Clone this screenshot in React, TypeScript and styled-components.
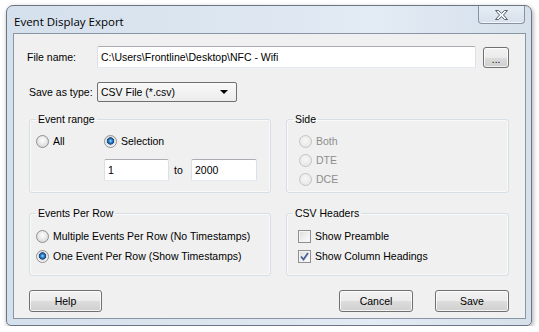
import React from 'react';
import styled, { createGlobalStyle } from 'styled-components';

const GlobalStyle = createGlobalStyle`
  html, body {
    margin: 0;
    padding: 0;
    background: #ffffff;
  }
  body {
    font-family: "Liberation Sans", Arial, sans-serif;
    font-size: 10.5px;
    color: #000;
  }
`;

const Window = styled.div`
  margin: 5px 0 0 6px;
  width: 526px;
  height: 321px;
  box-sizing: border-box;
  border: 1px solid #6a7684;
  border-radius: 7px 7px 5px 5px;
  background: linear-gradient(to right, #d4e0ec 0%, #dfe8f2 55%, #e3ebf4 70%, #d5e0eb 100%);
  box-shadow: 1px 2px 5px rgba(0, 0, 0, 0.35);
  display: flex;
  flex-direction: column;
`;

const TitleBar = styled.div`
  height: 27px;
  display: flex;
  align-items: flex-start;
  justify-content: space-between;
`;

const Title = styled.span`
  font-family: "Open Sans", "Noto Sans", sans-serif;
  font-size: 11.5px;
  line-height: 16px;
  margin: 8px 0 0 7px;
  color: #000;
`;

const CloseButton = styled.div`
  width: 47px;
  height: 18px;
  margin-right: 6px;
  box-sizing: border-box;
  border: 1px solid #8793a2;
  border-top: none;
  border-radius: 0 0 4px 4px;
  background: linear-gradient(#e6edf5, #d7e1ec);
  box-shadow: inset 0 -1px 0 rgba(255, 255, 255, 0.7);
  display: flex;
  align-items: center;
  justify-content: center;
  padding-top: 1px;
`;

const Client = styled.div`
  flex: 1;
  margin: 0 5px 6px 6px;
  border: 1px solid #8996a6;
  background: #f0f0f0;
  padding: 12px 16px 0 15px;
  display: flex;
  flex-direction: column;
`;

const FieldRow = styled.div<{ $top: number }>`
  display: flex;
  align-items: center;
  margin-top: ${p => p.$top}px;
`;

const Label = styled.span<{ $shift?: number }>`
  width: 68px;
  margin-left: ${p => p.$shift || 0}px;
  margin-right: ${p => -(p.$shift || 0)}px;
  flex-shrink: 0;
  white-space: nowrap;
`;

const TextInput = styled.div<{ $width: number }>`
  width: ${p => p.$width}px;
  height: 22px;
  box-sizing: border-box;
  background: #fff;
  border: 1px solid #dbdfe6;
  border-top-color: #abadb3;
  border-bottom-color: #e3e9ef;
  border-radius: 2px;
  padding: 0 3px;
  display: flex;
  align-items: center;
  white-space: nowrap;
  overflow: hidden;
`;

const PushButton = styled.div<{ $width: number }>`
  width: ${p => p.$width}px;
  height: 22px;
  box-sizing: border-box;
  border: 1px solid #707070;
  border-radius: 3px;
  background: linear-gradient(#f2f2f2 0%, #ebebeb 50%, #dddddd 51%, #cfcfcf 100%);
  box-shadow: inset 0 0 0 1px rgba(255, 255, 255, 0.75);
  display: flex;
  align-items: center;
  justify-content: center;
`;

const Dots = styled(PushButton)`
  margin-left: 7px;
  height: 21px;
  padding-top: 4px;
  font-size: 10px;
`;

const Select = styled.div`
  width: 140px;
  height: 20px;
  box-sizing: border-box;
  border: 1px solid #707070;
  border-radius: 2px;
  background: linear-gradient(#f9f9f9, #ececec);
  display: flex;
  align-items: center;
  justify-content: space-between;
  padding: 0 8px 0 3px;
`;

const Arrow = styled.span`
  width: 0;
  height: 0;
  border-left: 4px solid transparent;
  border-right: 4px solid transparent;
  border-top: 4px solid #000;
`;

const GroupRow = styled.div<{ $top: number }>`
  display: grid;
  grid-template-columns: 242px 1fr;
  column-gap: 15px;
  margin-top: ${p => p.$top}px;
`;

const Group = styled.fieldset<{ $height: number }>`
  margin: 0;
  padding: 0;
  height: ${p => p.$height}px;
  box-sizing: border-box;
  border: 1px solid #d5dfe5;
  border-radius: 3px;
  box-shadow: inset 0 0 0 1px rgba(255, 255, 255, 0.6);
  min-width: 0;
`;

const Legend = styled.legend`
  margin-left: 6px;
  padding: 0 2px;
  line-height: 13px;
`;

const GroupBody = styled.div<{ $left: number; $top: number; $gap: number }>`
  padding: ${p => p.$top}px 0 0 ${p => p.$left}px;
  display: flex;
  flex-direction: column;
  gap: ${p => p.$gap}px;
`;

const RangeGrid = styled.div`
  display: grid;
  grid-template-columns: 68px auto;
  row-gap: 10px;
`;

const RangeInputs = styled.div`
  display: flex;
  align-items: center;
`;

const ToLabel = styled.span`
  width: 22px;
  padding-left: 5px;
  box-sizing: border-box;
`;

const Option = styled.label<{ $disabled?: boolean }>`
  display: flex;
  align-items: center;
  gap: 4px;
  height: 16px;
  white-space: nowrap;
  color: ${p => (p.$disabled ? '#8d8d8d' : '#000')};
`;

const RadioDot = styled.span<{ $checked?: boolean; $disabled?: boolean }>`
  width: 13px;
  height: 13px;
  box-sizing: border-box;
  border-radius: 50%;
  border: 1px solid ${p => (p.$disabled ? '#c4c4c4' : '#8e8f8f')};
  background: ${p =>
    p.$checked
      ? 'radial-gradient(circle at 50% 45%, #a8e4ff 0px, #2f86cf 1.6px, #18467f 3.4px, #d6d6d6 3.9px, #f8f8f8 5.5px)'
      : p.$disabled
      ? 'radial-gradient(circle at 50% 40%, #f7f7f7 0%, #e3e3e3 100%)'
      : 'radial-gradient(circle at 50% 40%, #ffffff 0%, #e2e2e2 60%, #cfcfcf 100%)'};
  flex-shrink: 0;
`;

const CheckBox = styled.span`
  width: 13px;
  height: 13px;
  box-sizing: border-box;
  border: 1px solid #8e8f8f;
  background: linear-gradient(135deg, #dcdcdc 0%, #f4f4f4 70%, #ffffff 100%);
  box-shadow: inset 0 0 0 1px #f4f4f4;
  display: flex;
  align-items: center;
  justify-content: center;
  flex-shrink: 0;
`;

const ButtonRow = styled.div`
  display: flex;
  align-items: center;
  margin-top: 14px;
`;

const Spacer = styled.div`
  flex: 1;
`;

const ButtonGap = styled.div`
  width: 22px;
`;

function CloseGlyph() {
  return (
    <svg width="13" height="10" viewBox="0 0 13 10">
      <polygon
        points="0.5,0.5 3.5,0.5 6.5,3.3 9.5,0.5 12.5,0.5 8.5,5 12.5,9.5 9.5,9.5 6.5,6.7 3.5,9.5 0.5,9.5 4.5,5"
        fill="#f4f6f9"
        stroke="#58616c"
        strokeWidth="1"
        strokeLinejoin="round"
      />
    </svg>
  );
}

function Radio({ label, checked, disabled }: { label: string; checked?: boolean; disabled?: boolean }) {
  return (
    <Option $disabled={disabled}>
      <RadioDot $checked={checked} $disabled={disabled} />
      {label}
    </Option>
  );
}

function Check({ label, checked }: { label: string; checked?: boolean }) {
  return (
    <Option>
      <CheckBox>
        {checked && (
          <svg width="9" height="9" viewBox="0 0 9 9">
            <path d="M1 4.5 L3.5 7.5 L8 1" fill="none" stroke="#4a5f97" strokeWidth="1.8" />
          </svg>
        )}
      </CheckBox>
      {label}
    </Option>
  );
}

export default function App(): JSX.Element {
  return (
    <>
      <GlobalStyle />
      <Window>
        <TitleBar>
          <Title>Event Display Export</Title>
          <CloseButton>
            <CloseGlyph />
          </CloseButton>
        </TitleBar>
        <Client>
          <FieldRow $top={0}>
            <Label $shift={-2}>File name:</Label>
            <TextInput $width={380}>C:\Users\Frontline\Desktop\NFC - Wifi</TextInput>
            <Dots $width={26}>...</Dots>
          </FieldRow>
          <FieldRow $top={14}>
            <Label>Save as type:</Label>
            <Select>
              CSV File (*.csv)
              <Arrow />
            </Select>
          </FieldRow>

          <GroupRow $top={11}>
            <Group $height={80}>
              <Legend>Event range</Legend>
              <GroupBody $left={6} $top={7} $gap={0}>
                <RangeGrid>
                  <Radio label="All" />
                  <Radio label="Selection" checked />
                  <span />
                  <RangeInputs>
                    <TextInput $width={65}>1</TextInput>
                    <ToLabel>to</ToLabel>
                    <TextInput $width={66}>2000</TextInput>
                  </RangeInputs>
                </RangeGrid>
              </GroupBody>
            </Group>
            <Group $height={80}>
              <Legend>Side</Legend>
              <GroupBody $left={12} $top={7} $gap={3}>
                <Radio label="Both" disabled />
                <Radio label="DTE" disabled />
                <Radio label="DCE" disabled />
              </GroupBody>
            </Group>
          </GroupRow>

          <GroupRow $top={14}>
            <Group $height={69}>
              <Legend>Events Per Row</Legend>
              <GroupBody $left={6} $top={8} $gap={4}>
                <Radio label="Multiple Events Per Row (No Timestamps)" />
                <Radio label="One Event Per Row (Show Timestamps)" checked />
              </GroupBody>
            </Group>
            <Group $height={69}>
              <Legend>CSV Headers</Legend>
              <GroupBody $left={11} $top={8} $gap={4}>
                <Check label="Show Preamble" />
                <Check label="Show Column Headings" checked />
              </GroupBody>
            </Group>
          </GroupRow>

          <ButtonRow>
            <PushButton $width={73}>Help</PushButton>
            <Spacer />
            <PushButton $width={74}>Cancel</PushButton>
            <ButtonGap />
            <PushButton $width={74}>Save</PushButton>
          </ButtonRow>
        </Client>
      </Window>
    </>
  );
}
